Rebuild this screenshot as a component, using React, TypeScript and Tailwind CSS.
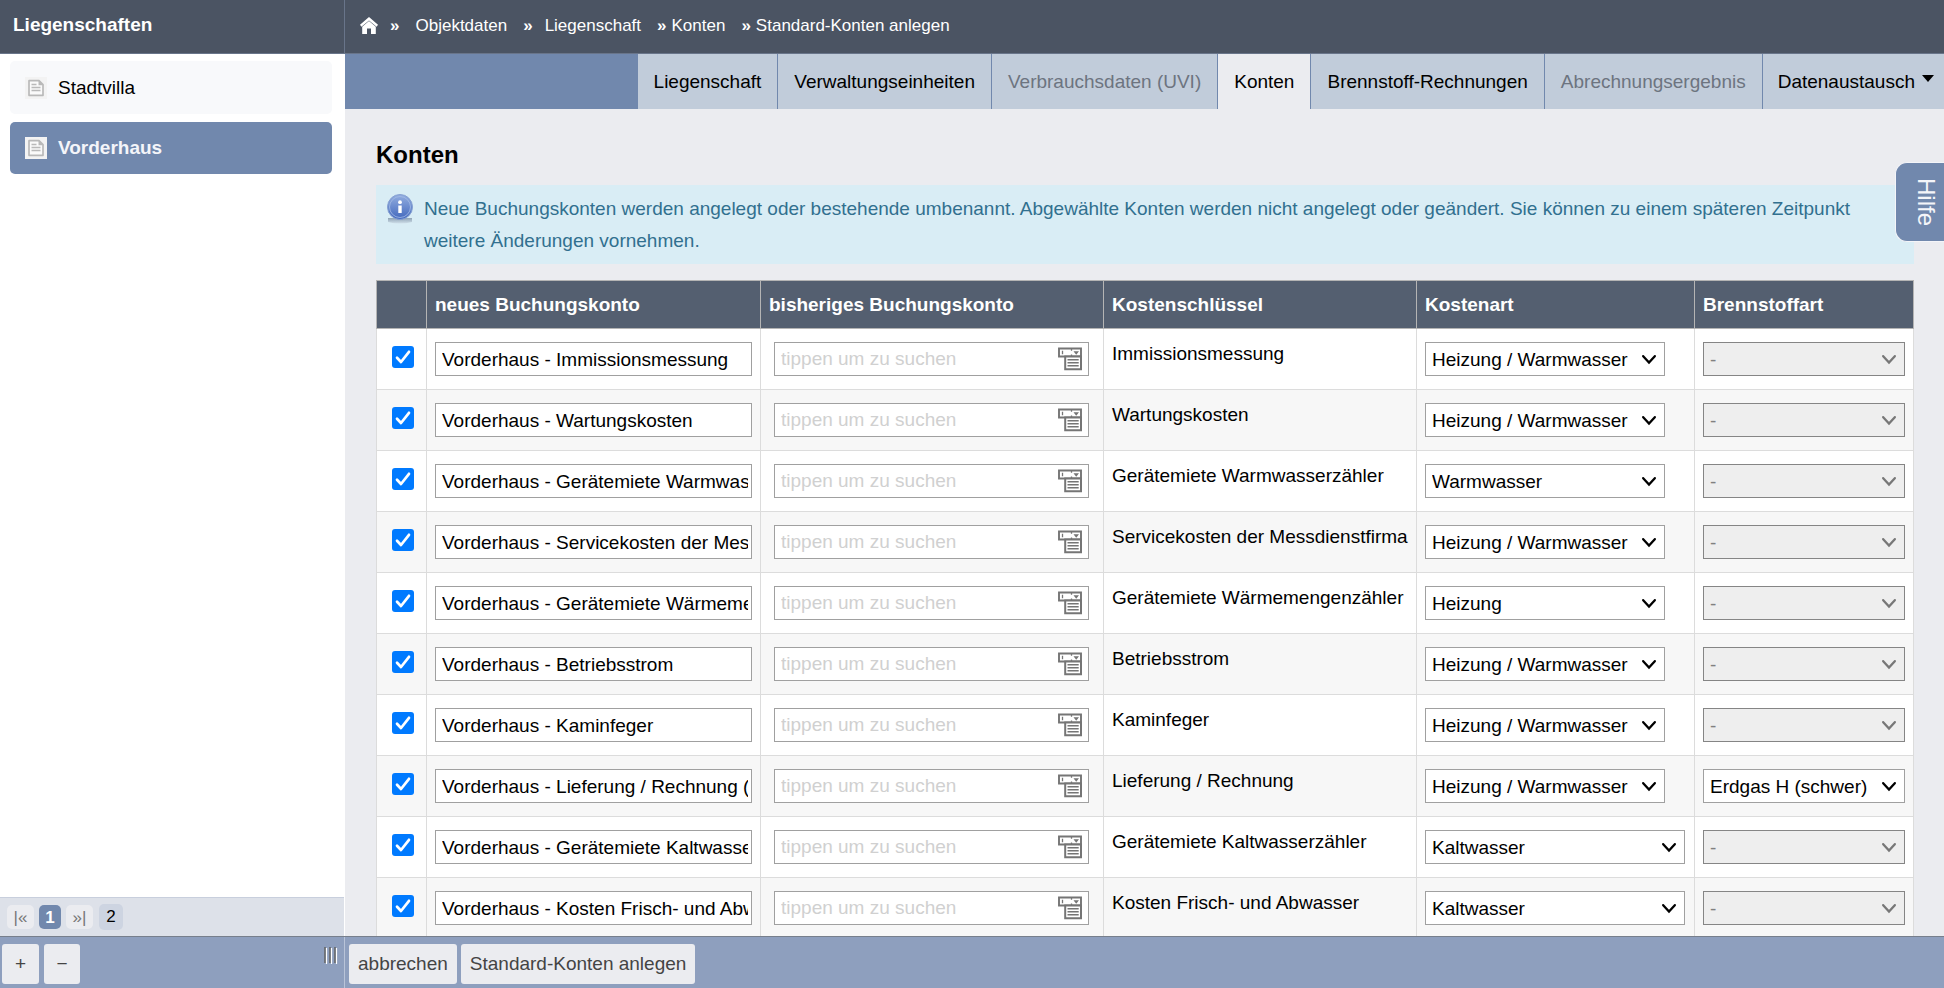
import type { ReactNode } from "react";

type Row = {
  name: string;
  key: string;
  kind: string;
  fuel?: string;
  wide?: boolean;
};

const rows: Row[] = [
  { name: "Vorderhaus - Immissionsmessung", key: "Immissionsmessung", kind: "Heizung / Warmwasser" },
  { name: "Vorderhaus - Wartungskosten", key: "Wartungskosten", kind: "Heizung / Warmwasser" },
  { name: "Vorderhaus - Gerätemiete Warmwasserzähler", key: "Gerätemiete Warmwasserzähler", kind: "Warmwasser" },
  { name: "Vorderhaus - Servicekosten der Messdienstfirma", key: "Servicekosten der Messdienstfirma", kind: "Heizung / Warmwasser" },
  { name: "Vorderhaus - Gerätemiete Wärmemengenzähler", key: "Gerätemiete Wärmemengenzähler", kind: "Heizung" },
  { name: "Vorderhaus - Betriebsstrom", key: "Betriebsstrom", kind: "Heizung / Warmwasser" },
  { name: "Vorderhaus - Kaminfeger", key: "Kaminfeger", kind: "Heizung / Warmwasser" },
  { name: "Vorderhaus - Lieferung / Rechnung (Erdgas)", key: "Lieferung / Rechnung", kind: "Heizung / Warmwasser", fuel: "Erdgas H (schwer)" },
  { name: "Vorderhaus - Gerätemiete Kaltwasserzähler", key: "Gerätemiete Kaltwasserzähler", kind: "Kaltwasser", wide: true },
  { name: "Vorderhaus - Kosten Frisch- und Abwasser", key: "Kosten Frisch- und Abwasser", kind: "Kaltwasser", wide: true },
];

const tabs = [
  { label: "Liegenschaft" },
  { label: "Verwaltungseinheiten" },
  { label: "Verbrauchsdaten (UVI)", disabled: true },
  { label: "Konten", active: true },
  { label: "Brennstoff-Rechnungen" },
  { label: "Abrechnungsergebnis", disabled: true },
];

function HomeIcon() {
  return (
    <svg width="18" height="17" viewBox="0 0 18 17" aria-hidden="true">
      <path d="M9 0 18 7.8 16.6 9.8 9 3.4 1.4 9.8 0 7.8Z" fill="#fff" />
      <path d="M9 4.1 15.8 9.8V17H11V11.5H7V17H2.2V9.8Z" fill="#fff" />
    </svg>
  );
}

function PageIcon() {
  return (
    <svg width="22" height="22" viewBox="0 0 22 22" className="shrink-0" aria-hidden="true">
      <path d="M0 0H22V22H0Z" fill="#f3f3f3" />
      <path d="M4 3.7H14L18 7.7V18.3H4Z" fill="#fafafa" stroke="#b9b9b9" strokeWidth="1.7" strokeLinejoin="round" />
      <path d="M13.5 3.7 18 8.2H13.5Z" fill="#b9b9b9" />
      <path d="M6.5 7.5H11.5M6.5 10.5H15.5M6.5 13.5H15.5" stroke="#b9b9b9" strokeWidth="1.5" />
    </svg>
  );
}

function InfoIcon() {
  return (
    <svg width="26" height="30" viewBox="0 0 26 30" className="mt-px shrink-0" aria-hidden="true">
      <defs>
        <linearGradient id="ball" x1="0" y1="0" x2="0" y2="1">
          <stop offset="0" stopColor="#93aee0" />
          <stop offset="1" stopColor="#4268bd" />
        </linearGradient>
        <linearGradient id="shade" x1="0" y1="0" x2="0" y2="1">
          <stop offset="0" stopColor="#8fa3b5" />
          <stop offset="1" stopColor="#d0e0ea" />
        </linearGradient>
      </defs>
      <path d="M1 24H25V28Q13 31 1 28Z" fill="url(#shade)" />
      <circle cx="13" cy="13" r="12.5" fill="url(#ball)" stroke="#86a0d2" />
      <circle cx="13" cy="13" r="10.5" fill="none" stroke="#a5bbe5" strokeWidth="0.8" />
      <circle cx="13" cy="8.2" r="1.9" fill="#fff" />
      <path d="M11.3 11.5H14.7V19H11.3Z" fill="#fff" />
    </svg>
  );
}

function ListIcon() {
  return (
    <svg width="24" height="24" viewBox="0 0 24 24" aria-hidden="true">
      <path d="M1 1.5H23V9.5H1Z" fill="#fff" stroke="#757575" strokeWidth="1.9" />
      <path d="M7.2 9.5H23V22.2H7.2Z" fill="#fff" stroke="#757575" strokeWidth="2" />
      <path d="M4.5 3.8V7.2M13.5 1.5V3.8M13.5 7.4V9.5" stroke="#757575" strokeWidth="1.3" />
      <path d="M15.5 4.2H21L18.2 7.8Z" fill="#757575" />
      <path d="M9.5 12.8H20.7M9.5 15.8H20.7M9.5 18.8H20.7" stroke="#757575" strokeWidth="1.5" />
    </svg>
  );
}

function Select({ label, value, className, disabled }: { label: string; value: string; className: string; disabled?: boolean }) {
  return (
    <div className={`relative mt-[5px] ${className}`}>
      <select
        aria-label={label}
        disabled={disabled}
        defaultValue={value}
        className="block h-[34px] w-full appearance-none border border-[#a0a0a0] bg-white px-[6px] pt-[2px] text-[19px] text-black disabled:border-[#858585] disabled:bg-[#eeeeee] disabled:text-[#808080] disabled:opacity-100"
      >
        <option>{value}</option>
      </select>
      <svg
        width="14"
        height="10"
        viewBox="0 0 14 10"
        className={`pointer-events-none absolute top-[13px] right-[9px] ${disabled ? "text-[#777777]" : "text-black"}`}
        aria-hidden="true"
      >
        <path d="M1.2 1.2 7 7.6 12.8 1.2" fill="none" stroke="currentColor" strokeWidth="2.3" strokeLinecap="round" />
      </svg>
    </div>
  );
}

function Crumb({ children }: { children: ReactNode }) {
  return (
    <a href="#" className="text-white">
      {children}
    </a>
  );
}

function SideItem({ label, active }: { label: string; active?: boolean }) {
  return (
    <a
      href="#"
      className={`flex items-center gap-[11px] rounded-[5px] px-[15px] ${
        active ? "h-[52px] bg-[#7188ad] font-bold text-[#f4f5f9]" : "h-[53px] bg-[#f8f9fb] text-black"
      }`}
    >
      <PageIcon />
      <span className="pt-px">{label}</span>
    </a>
  );
}

function AccountRow({ row, striped }: { row: Row; striped: boolean }) {
  return (
    <tr className={`h-[61px] align-top ${striped ? "bg-[#f7f7f7]" : "bg-white"}`}>
      <td className="border border-[#dcdcdc] pt-[17px] pl-[2px]">
        <label className="relative mx-auto block size-[22px]">
          <input
            type="checkbox"
            defaultChecked
            aria-label={row.key}
            className="block size-[22px] appearance-none rounded-[3px] bg-[#007aff]"
          />
          <svg width="22" height="22" viewBox="0 0 22 22" className="absolute inset-0" aria-hidden="true">
            <path d="M5 11.8 9 16 17 5.8" fill="none" stroke="#fff" strokeWidth="2.7" strokeLinecap="round" strokeLinejoin="round" />
          </svg>
        </label>
      </td>
      <td className="border border-[#dcdcdc] px-2 pt-2">
        <input
          type="text"
          aria-label={`neues Buchungskonto ${row.key}`}
          defaultValue={row.name}
          className="mt-[5px] block h-[34px] w-full border border-[#a0a0a0] bg-white pt-[2px] pr-[3px] pl-[6px] text-black"
        />
      </td>
      <td className="border border-[#dcdcdc] pt-2 pr-[14px] pl-[13px]">
        <div className="relative mt-[5px]">
          <input
            type="text"
            aria-label={`bisheriges Buchungskonto ${row.key}`}
            placeholder="tippen um zu suchen"
            className="block h-[34px] w-full border border-[#a0a0a0] bg-white pr-9 pl-[6px] placeholder:text-[#d0d0d0]"
          />
          <button type="button" aria-label="Liste öffnen" className="absolute top-[5px] right-[7px]">
            <ListIcon />
          </button>
        </div>
      </td>
      <td className="overflow-hidden border border-[#dcdcdc] px-2 pt-[9px] leading-8 whitespace-nowrap">{row.key}</td>
      <td className="border border-[#dcdcdc] px-2 pt-2">
        <Select label={`Kostenart ${row.key}`} value={row.kind} className={row.wide ? "w-[260px]" : "w-[240px]"} />
      </td>
      <td className="border border-[#dcdcdc] px-2 pt-2">
        <Select label={`Brennstoffart ${row.key}`} value={row.fuel ?? "-"} className="w-full" disabled={!row.fuel} />
      </td>
    </tr>
  );
}

export default function App() {
  return (
    <div className="flex h-screen flex-col overflow-hidden bg-[#ebecf0] font-['Liberation_Sans',Arial,sans-serif] text-[19px] text-black">
      <header className="flex h-[54px] shrink-0 border-b border-[#69758a] bg-[#4b5463] text-white">
        <div className="flex w-[345px] shrink-0 items-center border-r border-[#69758a] px-[13px] pb-[2px] font-bold">Liegenschaften</div>
        <nav className="flex items-center pb-[2px] pl-[15px] text-[17px] whitespace-nowrap">
          <a href="#" aria-label="Startseite">
            <HomeIcon />
          </a>
          <span className="ml-3 font-bold">»</span>
          <span className="ml-4">
            <Crumb>Objektdaten</Crumb>
          </span>
          <span className="ml-4 font-bold">»</span>
          <span className="ml-3">
            <Crumb>Liegenschaft</Crumb>
          </span>
          <span className="mr-[5px] ml-4 font-bold">»</span>
          <Crumb>Konten</Crumb>
          <span className="mr-[5px] ml-4 font-bold">»</span>
          <Crumb>Standard-Konten anlegen</Crumb>
        </nav>
      </header>

      <div className="flex min-h-0 flex-1">
        <aside className="flex w-[345px] shrink-0 flex-col bg-white">
          <div className="flex flex-1 flex-col gap-2 py-[7px] pr-[13px] pl-[10px]">
            <SideItem label="Stadtvilla" />
            <SideItem label="Vorderhaus" active />
          </div>
          <div className="mr-px flex h-[39px] items-center border-t border-[#c8cfdd] bg-[#dde1e9] pl-[7px] text-[17px]">
            <button type="button" className="h-6 w-[27px] rounded-[5px] bg-[#ebecf0] text-[#777777]">|«</button>
            <button type="button" className="ml-[5px] h-6 w-[22px] rounded-[5px] bg-[#7188ad] font-bold text-white">1</button>
            <button type="button" className="ml-[5px] h-6 w-[27px] rounded-[5px] bg-[#ebecf0] text-[#777777]">»|</button>
            <button type="button" className="ml-[6px] h-[26px] w-6 rounded-[5px] bg-[#cdd4e1]">2</button>
          </div>
        </aside>

        <div className="relative flex min-w-0 flex-1 flex-col">
          <nav className="flex h-[55px] shrink-0 justify-end bg-[#7188ad] whitespace-nowrap">
            {tabs.map((tab) => (
              <a
                key={tab.label}
                href="#"
                aria-disabled={tab.disabled}
                className={`mr-px flex items-center px-4 pt-[2px] ${
                  tab.active ? "bg-[#ebecf0]" : "bg-[#c1ccda]"
                } ${tab.disabled ? "text-[#6d7480]" : "text-black"}`}
              >
                {tab.label}
              </a>
            ))}
            <a href="#" className="flex items-center gap-[7px] bg-[#c1ccda] pt-[2px] pr-[10px] pl-[15px]">
              Datenaustausch
              <svg width="12" height="7" viewBox="0 0 12 7" className="mb-2" aria-hidden="true">
                <path d="M0 0H12L6 7Z" />
              </svg>
            </a>
          </nav>

          <main className="min-h-0 flex-1 overflow-hidden pt-8 pr-[30px] pl-[31px]">
            <h1 className="mb-4 text-[24px] leading-7 font-bold">Konten</h1>

            <div className="mb-4 flex gap-[11px] bg-[#d9edf5] px-[11px] pt-2 pb-[7px] leading-8 text-[#31708f]">
              <InfoIcon />
              <p>
                Neue Buchungskonten werden angelegt oder bestehende umbenannt. Abgewählte Konten werden nicht angelegt oder geändert. Sie können zu
                einem späteren Zeitpunkt weitere Änderungen vornehmen.
              </p>
            </div>

            <table className="w-full table-fixed border-collapse">
              <colgroup>
                <col className="w-[50px]" />
                <col className="w-[334px]" />
                <col className="w-[343px]" />
                <col className="w-[313px]" />
                <col className="w-[278px]" />
                <col />
              </colgroup>
              <thead>
                <tr className="h-12 bg-[#545f70] text-left text-white">
                  {["", "neues Buchungskonto", "bisheriges Buchungskonto", "Kostenschlüssel", "Kostenart", "Brennstoffart"].map((head) => (
                    <th key={head} className="border border-[#b4b4b4] px-2 pt-[2px]">
                      {head}
                    </th>
                  ))}
                </tr>
              </thead>
              <tbody>
                {rows.map((row, i) => (
                  <AccountRow key={row.key} row={row} striped={i % 2 === 1} />
                ))}
              </tbody>
            </table>
          </main>

          <button
            type="button"
            className="absolute top-[108px] right-0 flex h-20 w-[49px] items-center justify-center rounded-l-xl border border-r-0 border-[#f4f5f9] bg-[#7188ad] pl-3 text-[24px] text-[#f4f5f9] [writing-mode:vertical-rl]"
          >
            Hilfe
          </button>
        </div>
      </div>

      <footer className="flex h-[52px] shrink-0 border-t border-[#777f8c] bg-[#8e9fbe] text-[#444444]">
        <div className="flex w-[345px] shrink-0 gap-[5px] border-r border-[#b9c4d8] pt-[7px] pr-[6px] pl-[2px]">
          <button type="button" className="h-10 w-[37px] rounded-[3px] bg-[#ebecf0]">+</button>
          <button type="button" className="h-10 w-[36px] rounded-[3px] bg-[#ebecf0]">−</button>
          <svg width="14" height="17" viewBox="0 0 14 17" className="mt-[3px] ml-auto" aria-hidden="true">
            <path d="M1 0V16M6 0V16M11 0V16" stroke="#666" strokeWidth="1.6" />
            <path d="M2.5 1V17M7.5 1V17M12.5 1V17" stroke="#fff" strokeWidth="1.2" />
          </svg>
        </div>
        <div className="flex gap-1 pt-[7px] pl-1">
          <button type="button" className="h-10 rounded-[3px] bg-[#ebecf0] px-[9px]">abbrechen</button>
          <button type="button" className="h-10 rounded-[3px] bg-[#ebecf0] px-[9px]">Standard-Konten anlegen</button>
        </div>
      </footer>
    </div>
  );
}
